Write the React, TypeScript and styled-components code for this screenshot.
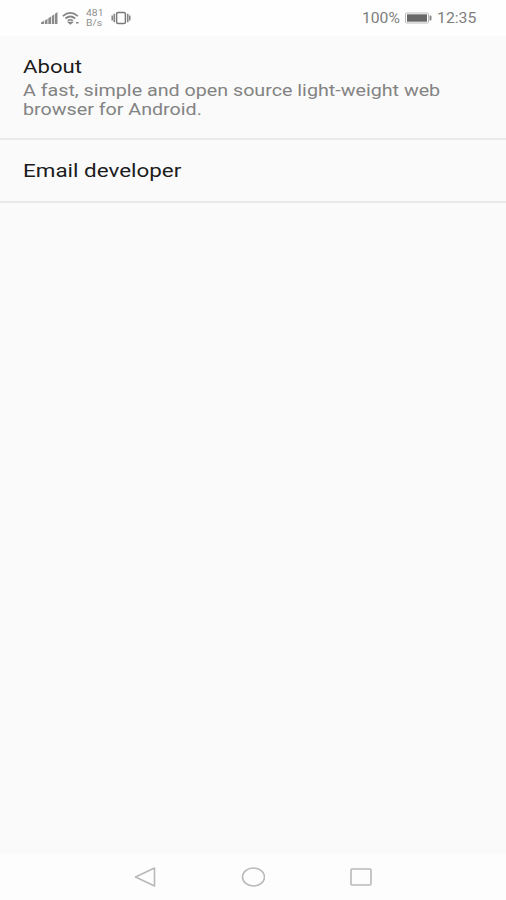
import React from "react";
import styled, { createGlobalStyle } from "styled-components";

const GlobalStyle = createGlobalStyle`
  body { margin: 0; background: #fafafa; }
  * { box-sizing: border-box; }
`;

const Screen = styled.div`
  display: flex;
  flex-direction: column;
  width: 100%;
  height: 900px;
  overflow: hidden;
  background: #fafafa;
  font-family: Roboto, "Liberation Sans", sans-serif;
`;

const StatusBar = styled.header`
  display: flex;
  align-items: center;
  justify-content: space-between;
  height: 36px;
  padding: 0 30px 0 41px;
  background: #fefefe;
  color: #7d7d7d;
`;

const StatusGroup = styled.div<{ $gap: number }>`
  display: flex;
  align-items: center;
  gap: ${(p) => p.$gap}px;
`;

const Wide = styled.span<{ $scale: number }>`
  display: block;
  width: max-content;
  white-space: pre;
  transform: scaleX(${(p) => p.$scale});
  transform-origin: left;
`;

const StatusText = styled.div<{ $width: number }>`
  width: ${(p) => p.$width}px;
  font-size: 14px;
  line-height: 16px;
`;

const Speed = styled.div`
  width: 18px;
  font-size: 9px;
  line-height: 10px;
  color: #909090;
`;

const List = styled.main`
  flex: 1;
`;

const Row = styled.section<{ $height: number }>`
  height: ${(p) => p.$height}px;
  padding: 20px 23px 0;
  border-bottom: 2px solid #e9e9e9;
`;

const Title = styled.div`
  font-size: 18px;
  line-height: 22px;
  color: #1c1c1c;
`;

const Summary = styled.div`
  margin-top: 3px;
  font-size: 16px;
  line-height: 19px;
  color: #838383;
`;

const NavBar = styled.nav`
  display: flex;
  align-items: center;
  justify-content: center;
  gap: 84px;
  height: 46px;
  background: #fdfdfd;
`;

const NavIcon = styled.svg`
  display: block;
  width: 24px;
  height: 22px;
  fill: none;
  stroke: #b9b9b9;
  stroke-width: 1.6;
  stroke-linejoin: round;
`;

const Signal = () => (
  <svg width="17" height="14" viewBox="0 0 17 14" fill="#8b8b8b">
    <path d="M0 13v-1.5l3-1.7V13zM3.8 13V9.4l2.7-1.7V13zM7.3 13V7.2L10 5.4V13zM10.8 13V4.9l2.5-1.7V13zM14 13V2.7L16.5 1v12z" />
  </svg>
);

const Wifi = () => (
  <svg width="18" height="14" viewBox="0 0 18 14" fill="none" stroke="#858585" strokeWidth="1.7">
    <path d="M.8 5.1Q8.3-1.2 15.8 5.1M3.4 7.5q4.9-4 9.8 0M5.8 9.7q2.5-1.9 5 0" />
    <path d="M6.9 11.4h3l-1.5 1.3zM14 11.8h2.6" fill="#858585" strokeWidth="1.5" />
  </svg>
);

const Vibrate = () => (
  <svg width="20" height="14" viewBox="0 0 20 14" fill="none" stroke="#797979" strokeWidth="1.5">
    <rect x="5.6" y="1.4" width="8.8" height="11.2" rx="1.4" />
    <path d="M3.2 2.8v8.4M16.8 2.8v8.4M1.2 4.5v5M18.8 4.5v5" strokeWidth="1.4" />
  </svg>
);

const Battery = () => (
  <svg width="27" height="12" viewBox="0 0 27 12">
    <rect x=".5" y="1" width="23" height="10" rx="1" fill="#fff" stroke="#bbb" />
    <rect x="2" y="2.3" width="20" height="7.4" fill="#686868" />
    <path d="M24.5 3.5h1q1 0 1 1v3q0 1-1 1h-1z" fill="#8a8a8a" />
  </svg>
);

export default function App() {
  return (
    <Screen>
      <GlobalStyle />
      <StatusBar>
        <StatusGroup $gap={6}>
          <StatusGroup $gap={4}>
            <Signal />
            <Wifi />
          </StatusGroup>
          <StatusGroup $gap={7}>
            <Speed>
              <Wide $scale={1.15}>481</Wide>
              <Wide $scale={1.15}>B/s</Wide>
            </Speed>
            <Vibrate />
          </StatusGroup>
        </StatusGroup>
        <StatusGroup $gap={5}>
          <StatusText $width={38}>
            <Wide $scale={1.12}>100%</Wide>
          </StatusText>
          <Battery />
          <StatusText $width={39}>
            <Wide $scale={1.13}>12:35</Wide>
          </StatusText>
        </StatusGroup>
      </StatusBar>
      <List>
        <Row $height={104}>
          <Title><Wide $scale={1.23}>About</Wide></Title>
          <Summary>
            <Wide $scale={1.23}>A fast, simple and open source light-weight web</Wide>
            <Wide $scale={1.23}>browser for Android.</Wide>
          </Summary>
        </Row>
        <Row $height={63}>
          <Title><Wide $scale={1.245}>Email developer</Wide></Title>
        </Row>
      </List>
      <NavBar>
        <NavIcon viewBox="0 0 24 22"><path d="M2.5 11 21.5 2v18z" /></NavIcon>
        <NavIcon viewBox="0 0 24 22"><ellipse cx="12.5" cy="11" rx="11" ry="9" /></NavIcon>
        <NavIcon viewBox="0 0 24 22"><rect x="2" y="3" width="20" height="16" rx="1" /></NavIcon>
      </NavBar>
    </Screen>
  );
}
